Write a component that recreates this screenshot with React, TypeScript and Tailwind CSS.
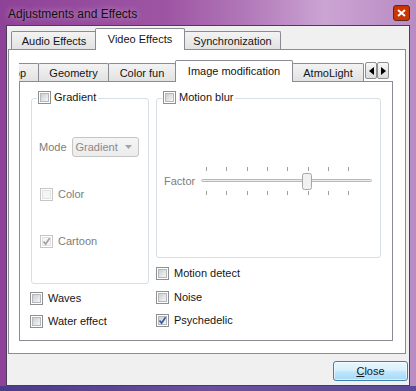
import React from "react";

const font = "font-['Liberation_Sans',Arial,sans-serif]";

const Check = ({ checked, disabled }: { checked?: boolean; disabled?: boolean }) => (
  <span
    className={
      "relative flex h-[13px] w-[13px] shrink-0 items-center justify-center border bg-white " +
      (disabled ? "border-[#c6c6c6]" : "border-[#8e8f8f]")
    }
  >
    <span
      className={
        "h-[9px] w-[9px] border " +
        (disabled
          ? "border-[#e2e2e2] bg-[#f5f5f5]"
          : "border-[#b4b8bd] bg-[linear-gradient(135deg,#cbcfd4,#f5f5f5)]")
      }
    />
    {checked && (
      <svg className="absolute left-0 top-0" width="11" height="11" viewBox="0 0 11 11">
        <path
          d="M2.5 5.5 L4.6 8 L8.6 2.2"
          fill="none"
          stroke={disabled ? "#a4a4a4" : "#40599a"}
          strokeWidth="1.7"
        />
      </svg>
    )}
  </span>
);

const Option = ({
  label,
  checked,
  disabled,
  className = "",
}: {
  label: string;
  checked?: boolean;
  disabled?: boolean;
  className?: string;
}) => (
  <div className={"flex h-[13px] items-center gap-[5px] " + className}>
    <Check checked={checked} disabled={disabled} />
    <span className={"whitespace-nowrap leading-none " + (disabled ? "text-[#7d7d7d]" : "text-[#151515]")}>
      {label}
    </span>
  </div>
);

const Tab = ({ label, width, className = "" }: { label: string; width: string; className?: string }) => (
  <div
    className={
      "flex h-[18px] shrink-0 items-center justify-center rounded-t-[2px] border border-b-0 border-[#898c95] bg-[linear-gradient(#f3f3f3,#e2e2e2)] pt-[1px] " +
      width +
      " " +
      className
    }
  >
    {label}
  </div>
);

const ActiveTab = ({ label, width, className = "" }: { label: string; width: string; className?: string }) => (
  <div
    className={
      "relative z-10 mb-[-1px] flex h-[22px] shrink-0 items-center justify-center rounded-t-[2px] border border-b-0 border-[#898c95] bg-white pb-[1px] " +
      width +
      " " +
      className
    }
  >
    {label}
  </div>
);

const Arrow = ({ dir }: { dir: "left" | "right" }) => (
  <div className="flex h-[17px] w-[12px] shrink-0 items-center justify-center self-start rounded-[2px] border border-[#8e8f8f] bg-[linear-gradient(#f7f7f7,#dcdcdc)]">
    <svg width="5" height="8" viewBox="0 0 5 8">
      <path d={dir === "left" ? "M5 0 L0 4 L5 8 Z" : "M0 0 L5 4 L0 8 Z"} fill="#000" />
    </svg>
  </div>
);

const Slider = () => {
  const ticks = [5, 25, 46, 66, 86, 107, 127, 147];
  return (
    <svg width="172" height="29" viewBox="0 0 172 29">
      {ticks.map((x) => (
        <g key={x} stroke="#a3a08f" strokeWidth="1">
          <line x1={x + 0.5} y1="0" x2={x + 0.5} y2="4" />
          <line x1={x + 0.5} y1="24" x2={x + 0.5} y2="28" />
        </g>
      ))}
      <rect x="0.5" y="12.5" width="170" height="2" rx="1" fill="#ececec" stroke="#b8b8b8" />
      <rect x="101.5" y="6.5" width="9" height="16" rx="2" fill="#f1f1f1" stroke="#a6a6a6" />
    </svg>
  );
};

const Group = ({
  title,
  className,
  children,
}: {
  title: string;
  className: string;
  children?: React.ReactNode;
}) => (
  <div className={"relative rounded-[3px] border border-[#d5dfe5] " + className}>
    <div className="absolute left-[5px] top-[-8px] flex bg-white pl-[1px] pr-[2px]">
      <div className="flex h-[13px] items-center gap-[3px]">
        <Check />
        <span className="whitespace-nowrap leading-none text-[#151515]">{title}</span>
      </div>
    </div>
    {children}
  </div>
);

export default function App() {
  return (
    <div
      className={
        "flex h-[391px] w-[416px] flex-col overflow-hidden bg-[linear-gradient(90deg,#8e4297_0%,#9d55a3_40%,#b27ab9_60%,#cba4d3_78%,#b98bc3_100%)] text-[11px] " +
        font
      }
    >
      <div className="flex h-[25px] shrink-0 items-start pl-[8px] pr-[6px]">
        <span className="mt-[5px] text-[12px] text-[#111] [text-shadow:0_0_6px_rgba(255,255,255,0.55)]">
          Adjustments and Effects
        </span>
        <div className="ml-auto mt-[5px] flex h-[16px] w-[17px] items-center justify-center rounded-[3px] border border-[#5b2a24] bg-orange-700">
          <svg width="9" height="8" viewBox="0 0 9 8">
            <path d="M1 1 L8 7 M8 1 L1 7" stroke="#fff" strokeWidth="2" />
          </svg>
        </div>
      </div>

      <div className="mx-[6px] flex h-[361px] w-[404px] flex-col border border-[#4a3d55] bg-[#f0f0f0]">
        <div className="ml-[1px] w-[398px]">
          <div className="flex h-[23px] items-end pl-[3px] text-[#151515]">
            <Tab label="Audio Effects" width="w-[86px]" />
            <ActiveTab label="Video Effects" width="w-[90px]" className="ml-[-2px]" />
            <Tab label="Synchronization" width="w-[97px]" className="ml-[-1px]" />
          </div>

          <div className="h-[305px] border border-[#898c95] bg-white">
            <div className="ml-[10px] mt-[10px] w-[374px]">
              <div className="flex h-[21px] items-end text-[#151515]">
                <div className="flex h-[18px] w-[20px] shrink-0 items-center justify-end overflow-hidden rounded-tr-[2px] border border-b-0 border-l-0 border-[#898c95] bg-[linear-gradient(#f3f3f3,#e2e2e2)] pr-[12px] pt-[1px]">
                  <span className="whitespace-nowrap">Crop</span>
                </div>
                <Tab label="Geometry" width="w-[71px]" className="ml-[-1px]" />
                <Tab label="Color fun" width="w-[68px]" className="ml-[-1px]" />
                <ActiveTab label="Image modification" width="w-[118px]" className="ml-[-1px]" />
                <Tab label="AtmoLight" width="w-[72px]" className="ml-[-1px]" />
                <div className="ml-[1px] mt-[2px] flex self-start">
                  <Arrow dir="left" />
                  <Arrow dir="right" />
                </div>
              </div>

              <div className="flex h-[260px] border border-[#898c95] bg-white pl-[10px] pt-[16px]">
                <div className="flex w-[119px] flex-col">
                  <Group title="Gradient" className="ml-[1px] h-[186px] w-[118px]">
                    <div className="flex flex-col pl-[7px] pt-[38px]">
                      <div className="flex items-center gap-[5px]">
                        <span className="text-[#7d7d7d]">Mode</span>
                        <div className="flex h-[20px] w-[67px] items-center justify-between rounded-[3px] border border-[#c5c5c5] bg-[linear-gradient(#f5f5f5,#ececec)] pl-[3px] pr-[6px] text-[#8a8a8a]">
                          <span>Gradient</span>
                          <svg width="7" height="4" viewBox="0 0 7 4">
                            <path d="M0 0 L7 0 L3.5 4 Z" fill="#a3a3a3" />
                          </svg>
                        </div>
                      </div>
                      <Option label="Color" disabled className="ml-[1px] mt-[31px]" />
                      <Option label="Cartoon" checked disabled className="ml-[1px] mt-[34px]" />
                    </div>
                  </Group>
                  <Option label="Waves" className="mt-[8px]" />
                  <Option label="Water effect" className="mt-[10px]" />
                </div>

                <div className="ml-[7px] flex flex-col">
                  <Group title="Motion blur" className="h-[160px] w-[225px]">
                    <div className="flex items-center pl-[7px] pt-[68px]">
                      <span className="mb-[1px] w-[37px] text-[#7d7d7d]">Factor</span>
                      <Slider />
                    </div>
                  </Group>
                  <Option label="Motion detect" className="mt-[9px]" />
                  <Option label="Noise" className="mt-[11px]" />
                  <Option label="Psychedelic" checked className="mt-[10px]" />
                </div>
              </div>
            </div>
          </div>
        </div>

        <div className="flex justify-end pr-[1px] pt-[7px]">
          <button className="flex h-[20px] w-[75px] items-center justify-center rounded-[3px] border border-[#3c7fb1] bg-[linear-gradient(#eaf6fd,#d9f0fc_45%,#bee6fd_55%,#a7d9f5)] text-[11px] text-[#151515] shadow-[inset_0_0_0_1px_rgba(255,255,255,0.6)]">
            <span>
              <span className="underline underline-offset-1">C</span>lose
            </span>
          </button>
        </div>
      </div>
      <div className="flex-1 bg-[linear-gradient(90deg,#4b3a8a,#6c4ea0_50%,#5a4b96)]" />
    </div>
  );
}
